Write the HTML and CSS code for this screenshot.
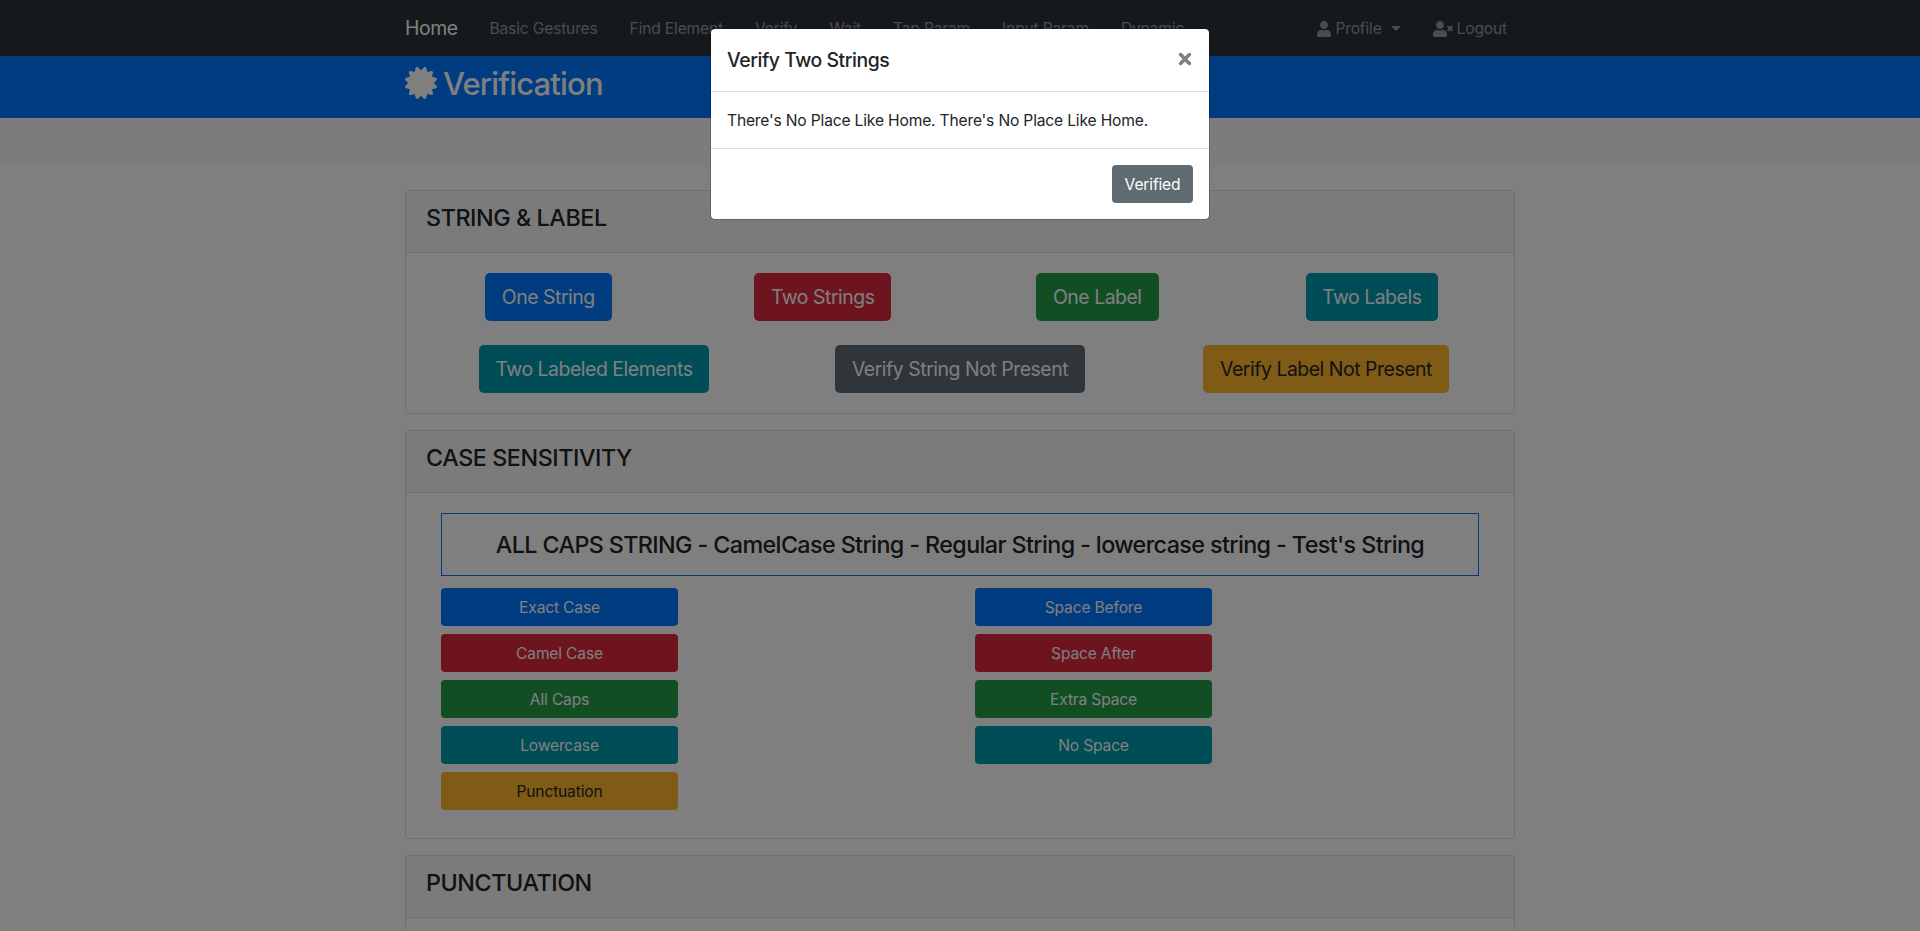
FILE: index.html
```html
<!DOCTYPE html>
<html lang="en">
<head>
<meta charset="utf-8">
<title>Verification</title>
<link rel="stylesheet" href="styles.css">
</head>
<body>
<nav class="navbar">
  <div class="container nav-inner">
    <a class="brand">Home</a>
    <div class="nav-links">
      <a>Basic Gestures</a><a>Find Element</a><a>Verify</a><a>Wait</a><a>Tap Param</a><a>Input Param</a><a>Dynamic</a>
    </div>
    <div class="nav-links nav-right">
      <a class="profile"><svg class="icon-user" viewBox="0 0 448 512"><path d="M224 256c70.7 0 128-57.3 128-128S294.7 0 224 0 96 57.3 96 128s57.3 128 128 128zm89.6 32h-16.7c-22.2 10.2-46.9 16-72.9 16s-50.6-5.8-72.9-16h-16.7C60.2 288 0 348.2 0 422.4V464c0 26.5 21.5 48 48 48h352c26.5 0 48-21.5 48-48v-41.6c0-74.2-60.2-134.4-134.4-134.4z"/></svg>Profile<span class="caret"></span></a>
      <a class="logout"><svg class="icon-times" viewBox="0 0 640 512"><path d="M224 256c70.7 0 128-57.3 128-128S294.7 0 224 0 96 57.3 96 128s57.3 128 128 128zm89.6 32h-16.7c-22.2 10.2-46.9 16-72.9 16s-50.6-5.8-72.9-16h-16.7C60.2 288 0 348.2 0 422.4V464c0 26.5 21.5 48 48 48h352c26.5 0 48-21.5 48-48v-41.6c0-74.2-60.2-134.4-134.4-134.4z"/><path d="M589.6 240l45.6-45.6c6.3-6.3 6.3-16.5 0-22.8l-22.8-22.8c-6.3-6.3-16.5-6.3-22.8 0L544 194.4l-45.6-45.6c-6.3-6.3-16.5-6.3-22.8 0l-22.8 22.8c-6.3 6.3-6.3 16.5 0 22.8l45.6 45.6-45.6 45.6c-6.3 6.3-6.3 16.5 0 22.8l22.8 22.8c6.3 6.3 16.5 6.3 22.8 0l45.6-45.6 45.6 45.6c6.3 6.3 16.5 6.3 22.8 0l22.8-22.8c6.3-6.3 6.3-16.5 0-22.8L589.6 240z"/></svg>Logout</a>
    </div>
  </div>
</nav>
<header class="page-header">
  <div class="container title-row">
    <svg class="icon-cert" viewBox="0 0 512 512"><path d="M458.622 255.92l45.985-45.005c13.708-12.977 7.316-36.039-10.664-40.339l-62.65-15.99 17.661-62.015c4.991-17.838-11.829-34.663-29.661-29.671l-61.994 17.667-15.984-62.671C337.085.197 313.765-6.276 300.99 7.228L256 53.57 211.011 7.229c-12.63-13.351-36.047-7.234-40.325 10.668l-15.984 62.671-61.995-17.667C74.87 57.907 58.056 74.738 63.046 92.572l17.661 62.015-62.65 15.99C.069 174.878-6.31 197.944 7.392 210.915l45.985 45.005-45.985 45.004c-13.708 12.977-7.316 36.039 10.664 40.339l62.65 15.99-17.661 62.015c-4.991 17.838 11.829 34.663 29.661 29.671l61.994-17.667 15.984 62.671c4.439 18.575 27.696 24.018 40.325 10.668L256 458.61l44.989 46.001c12.5 13.488 35.987 7.486 40.325-10.668l15.984-62.671 61.994 17.667c17.836 4.994 34.651-11.837 29.661-29.671l-17.661-62.015 62.65-15.99c17.987-4.302 24.366-27.367 10.664-40.339l-45.984-45.004z"/></svg>
    <h1>Verification</h1>
  </div>
</header>
<section class="action-strip"></section>
<main class="container cards">
  <section class="card">
    <div class="card-header"><h4>STRING &amp; LABEL</h4></div>
    <div class="card-body">
      <div class="row row-four">
        <button class="btn btn-lg primary w127">One String</button>
        <button class="btn btn-lg danger w137">Two Strings</button>
        <button class="btn btn-lg success w123">One Label</button>
        <button class="btn btn-lg info w132">Two Labels</button>
      </div>
      <div class="row row-three">
        <button class="btn btn-lg info w230">Two Labeled Elements</button>
        <button class="btn btn-lg secondary w250">Verify String Not Present</button>
        <button class="btn btn-lg warning w246">Verify Label Not Present</button>
      </div>
    </div>
  </section>
  <section class="card">
    <div class="card-header"><h4>CASE SENSITIVITY</h4></div>
    <div class="card-body case-body">
      <div class="sample"><h4>ALL CAPS STRING - CamelCase String - Regular String - lowercase string - Test's String</h4></div>
      <div class="case-columns">
        <div class="case-col">
          <button class="btn primary">Exact Case</button>
          <button class="btn danger">Camel Case</button>
          <button class="btn success">All Caps</button>
          <button class="btn info">Lowercase</button>
          <button class="btn warning">Punctuation</button>
        </div>
        <div class="case-col">
          <button class="btn primary">Space Before</button>
          <button class="btn danger">Space After</button>
          <button class="btn success">Extra Space</button>
          <button class="btn info">No Space</button>
        </div>
      </div>
    </div>
  </section>
  <section class="card last-card">
    <div class="card-header"><h4>PUNCTUATION</h4></div>
    <div class="card-body"></div>
  </section>
</main>
<div class="backdrop">
  <div class="modal">
    <div class="modal-header"><h5>Verify Two Strings</h5>
      <svg class="close" viewBox="0 0 14 14"><path d="M2.6 2.6L11.4 11.4M11.4 2.6L2.6 11.4"/></svg>
    </div>
    <div class="modal-body">There's No Place Like Home. There's No Place Like Home.</div>
    <div class="modal-footer"><button class="btn secondary">Verified</button></div>
  </div>
</div>
</body>
</html>
```
FILE: styles.css
```css
* { box-sizing: border-box; }
body {
  margin: 0;
  height: 931px;
  overflow: hidden;
  background: #fff;
  color: #212529;
  font: 430 15.6px/24px Inter, "Liberation Sans", sans-serif;
  letter-spacing: -0.17px;
}
h1, h4, h5 { margin: 0; font-weight: 530; }
.container { width: 1110px; margin: 0 auto; }
.navbar { height: 56px; background: #2d3338; }
.nav-inner { display: flex; align-items: center; height: 56px; }
.brand { color: #fff; font-size: 19.4px; letter-spacing: -0.4px; width: 84.5px; }
.nav-links { display: flex; gap: 32px; padding-top: 1px; color: #96989b; white-space: nowrap; }
.nav-right { margin-left: auto; padding-right: 8px; }
.nav-right a { display: flex; align-items: center; }
.icon-user { width: 14px; height: 16px; margin-right: 4px; fill: currentColor; }
.icon-times { width: 20px; height: 16px; margin-right: 4px; fill: currentColor; }
.caret { margin-left: 9px; border: 5px solid transparent; border-top-color: currentColor; border-bottom: 0; }
.page-header { height: 62px; padding-top: 8px; background: #0079ff; }
.title-row { display: flex; align-items: center; height: 38px; gap: 6px; color: #fff; }
.title-row h1 { padding-top: 2px; font-size: 31px; line-height: 38px; letter-spacing: -0.85px; }
.icon-cert { width: 32px; height: 32px; fill: #fff; }
.action-strip { height: 48px; background: #f8f8f8; }
.cards { height: 765px; padding-top: 24px; display: flex; flex-direction: column; gap: 16px; overflow: hidden; }
.card { border: 1px solid #dfdfdf; border-radius: 4px; flex: none; }
.last-card { flex: 1; border-bottom: 0; border-radius: 4px 4px 0 0; }
.card-header { height: 62px; padding: 12px 20px; background: #f7f7f7; border-bottom: 1px solid #dfdfdf; }
.card-header h4, .sample h4 { font-size: 23.3px; line-height: 29px; letter-spacing: -0.42px; }
.sample h4 { letter-spacing: -0.6px; }
.card-body { height: 160px; padding: 20px 5px; display: flex; flex-direction: column; gap: 24px; }
.last-card .card-body { height: auto; padding: 0; }
.row { display: grid; justify-items: center; }
.row-four { grid-template-columns: repeat(4, 1fr); }
.row-three { grid-template-columns: repeat(3, 1fr); }
.btn { height: 38px; padding: 1px 0 0; border: 0; border-radius: 4px; color: #fff; font: inherit; letter-spacing: inherit; white-space: nowrap; }
.btn-lg { height: 48px; padding: 0; border-radius: 5px; font-size: 19.4px; letter-spacing: -0.45px; }
.w127 { width: 127px; }
.w137 { width: 137px; }
.w123 { width: 123px; }
.w132 { width: 132px; }
.w230 { width: 230px; }
.w250 { width: 250px; }
.w246 { width: 246px; }
.primary { background: #0079ff; }
.danger { background: #dc283c; }
.success { background: #249c48; }
.info { background: #009aae; }
.secondary { background: #5f6a71; }
.warning { background: #ffb62c; color: #212529; }
.case-body { height: 345px; padding: 20px 35px; gap: 12px; }
.sample { height: 63px; border: 1px solid #0079ff; display: flex; align-items: center; justify-content: center; }
.case-columns { display: grid; grid-template-columns: 504px 504px; gap: 30px; }
.case-col { display: flex; flex-direction: column; gap: 8px; }
.case-col .btn { width: 237px; }
.backdrop { position: absolute; inset: 0; padding-top: 28px; background: rgba(0, 0, 0, 0.5); }
.modal { width: 500px; margin: 0 auto; background: #fff; background-clip: padding-box; border: 1px solid rgba(0, 0, 0, 0.2); border-radius: 5px; }
.modal-header { display: flex; justify-content: space-between; height: 63px; padding: 16px; border-bottom: 1px solid #dbdfe3; }
.modal-header h5 { font-size: 19.4px; line-height: 30px; letter-spacing: -0.45px; }
.close { width: 14px; height: 14px; margin: 7px 1px 0 0; fill: none; stroke: #7f7f7f; stroke-width: 3.6; stroke-linecap: round; }
.modal-body { height: 56px; padding: 17px 16px 15px; }
.modal-footer { display: flex; justify-content: flex-end; height: 71px; padding: 16px; border-top: 1px solid #dbdfe3; }
.modal-footer .btn { width: 81px; }
```
